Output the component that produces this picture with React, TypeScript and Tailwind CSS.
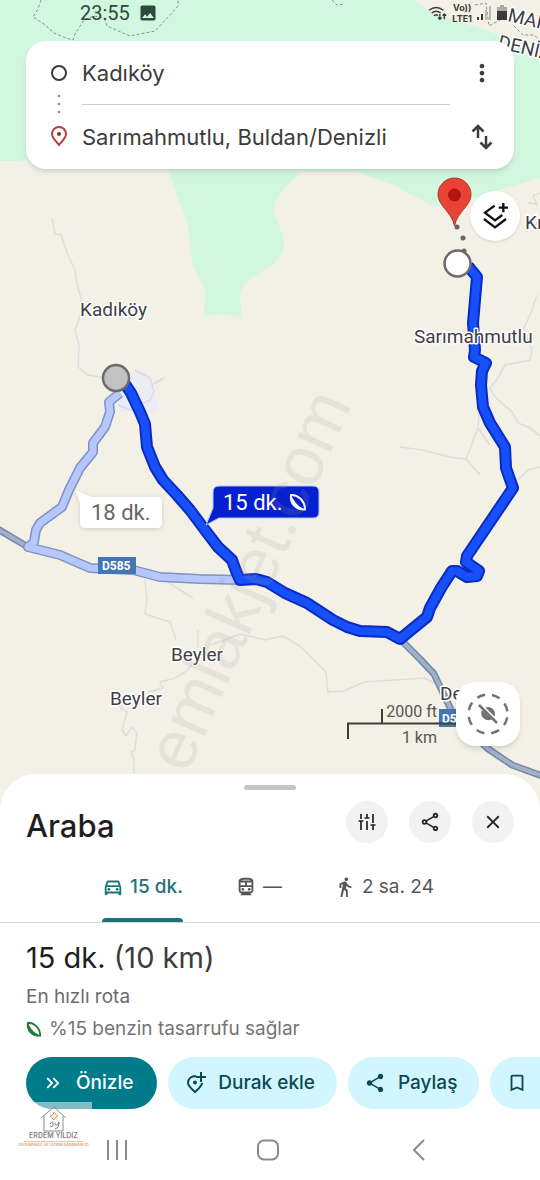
import { useState, type ReactNode } from 'react'
import {
  MdBookmarkBorder,
  MdClose,
  MdDirectionsWalk,
  MdImage,
  MdKeyboardDoubleArrowRight,
  MdMoreVert,
  MdOutlineDirectionsCar,
  MdOutlineDirectionsSubway,
  MdOutlineShare,
  MdShare,
} from 'react-icons/md'

const MAIN_ROUTE =
  'M125 384 131 393 140 412 145 424 147 447 155 467 163 480 177 495 190 510 205 530 218 547 232 560 236 571 240 580 256 579 267 582 285 593 307 603 333 620 347 627 360 631 387 632 400 639 427 617 430 608 441 588 452 571 457 571 467 577 477 576 479 571 466 562 467 556 513 488 506 468 505 447 490 423 483 407 481 385 482 371 486 363 474 357 475 350 473 323 475 300 477 277 468 266'

const ALT_ROUTE =
  'M120 393 109 402 110 412 105 427 93 443 93 452 80 468 69 490 62 507 40 523 36 530 34 542 28 547 60 555 90 568 133 570 160 577 200 579 240 580'

const TRACKS = [
  'M52 218 55 234 61 235 68 255 75 270 77 285 81 298 82 310 75 330 79 345 78 367 88 375 105 378',
  'M145 580 147 600 145 614 157 618 170 622 176 640',
  'M168 582 180 590 193 598',
  'M192 665 185 672 175 678 160 682 163 688 148 692',
  'M198 630V648M210 645 225 640 240 634 265 640 283 636 300 646 314 660 326 672 328 692 344 691 364 682 425 678 436 684',
  'M124 700 121 708 127 712 122 730 126 736 132 727 137 733 135 750 131 752 134 760 134 780',
  'M537 295 530 315 524 328 532 350 530 360 505 365 498 378 490 388 495 397 512 412 518 423 530 428 540 436',
  'M400 447 422 450 450 457 466 459 480 475M466 459 478 428 480 400M478 428 490 445',
  'M528 203 537 204 533 196 540 193M540 467 528 470 518 480',
]

function LeafIcon({ className }: { className?: string }) {
  return (
    <svg viewBox="0 0 18 18" className={className} aria-hidden="true">
      <path d="M2 2C1 10 6 17 16 16.500 10 14 5 9 2 2Z" fill="currentColor" />
      <path
        d="M2 2C8 1.500 16 7 16 16.500 6 17 1 10 2 2Z"
        fill="none"
        stroke="currentColor"
        strokeWidth="2"
        strokeLinejoin="round"
      />
    </svg>
  )
}

function MapCanvas() {
  return (
    <svg
      viewBox="0 0 540 810"
      preserveAspectRatio="xMidYMin slice"
      className="absolute inset-0 h-full w-full"
      role="img"
      aria-label="Harita"
    >
      <rect width="540" height="810" fill="#f3f0e5" />
      <path d="M0 0H415L430 12 500 35 540 60V178L495 191 450 206 435 207 395 186 355 171H302L283 190Q271 205 275 215L283 236Q287 248 276 262L250 279Q241 286 240 296L242 318Q222 312 204 316L205 290 193 265 187 222 166 165 150 161H0Z" fill="#d1f8df" />
      <g fill="none" stroke="#7f9a90" strokeWidth="1" strokeDasharray="3 2">
        <path d="M41 0 38 9 33 17 44 24 54 33 66 38 73 40 75 34 84 20 94 16 104 18 107 26 130 36 155 31 170 15 178 6V-2" />
        <path d="M332 0 337 5 345 4" />
        <path d="M475 5 486 3 489 26 500 20M514 26 523 35 534 35 540 40" />
      </g>

      <g fill="none" stroke="#dcdde0" strokeWidth="1.5">
        {TRACKS.map((d) => (
          <path key={d} d={d} />
        ))}
      </g>
      <path d="M128 372 145 371 152 388 158 402 157 412 120 412 116 400Z" fill="#ebecf4" />
      <path d="M135 370 150 378 154 392 150 400 130 410 118 405M152 385 164 378" fill="none" stroke="#d9dbe6" strokeWidth="1.500" />

      <g fill="none" strokeLinejoin="round">
        <path d="M-4 528 28 547M400 639 420 659 434 674 444 695 454 716 487 748 512 765 545 777" stroke="#7488a6" strokeWidth="7" />
        <path d="M-4 528 28 547M400 639 420 659 434 674 444 695 454 716 487 748 512 765 545 777" stroke="#a1b1c9" strokeWidth="4" />
        <path d={ALT_ROUTE} stroke="#7d92c6" strokeWidth="10" />
        <path d={ALT_ROUTE} stroke="#b6c8fb" strokeWidth="7" />
        <path d={MAIN_ROUTE} stroke="#0a2ac4" strokeWidth="12" />
        <path d={MAIN_ROUTE} stroke="#1750fb" strokeWidth="8" />
      </g>

      {/* endpoints */}
      <circle cx="116" cy="378" r="13" fill="#c2c2c2" stroke="#6b6b6b" strokeWidth="2.500" />
      <g fill="#666">
        <circle cx="457" cy="227" r="2.500" />
        <circle cx="463" cy="238" r="2.500" />
        <circle cx="464" cy="251" r="2.500" />
      </g>
      <circle cx="457.500" cy="263.500" r="13" fill="#fff" stroke="#6b6b6b" strokeWidth="2.500" />
      <path d="M454.500 226C452 212 438 206 438 194.500a16.500 16.500 0 0 1 33 0C471 206 457 212 454.500 226Z" fill="#ea4335" stroke="#a83a31" strokeWidth="1" />
      <circle cx="454.500" cy="195" r="6.500" fill="#b31412" />

      <g
        fontFamily="Roboto, sans-serif"
        fontSize="19"
        fill="#3c4046"
        stroke="#fff"
        strokeWidth="3"
        strokeLinejoin="round"
        paintOrder="stroke"
      >
        <text x="80" y="316">Kadıköy</text>
        <text x="414" y="343">Sarımahmutlu</text>
        <text x="171" y="661">Beyler</text>
        <text x="110" y="705">Beyler</text>
        <text x="525" y="229">Kı</text>
        <text x="440" y="700">De</text>
        <text transform="translate(507 21) rotate(13)">MAN</text>
        <text transform="translate(497 48) rotate(13)">DENİZ</text>
      </g>

      <g fontFamily="Roboto, sans-serif" fontSize="12" fontWeight="700" fill="#fff">
        <rect x="98" y="557" width="38" height="17" fill="#4277b3" />
        <text x="102" y="570">D585</text>
        <rect x="439" y="709" width="38" height="18" fill="#4277b3" />
        <text x="442" y="723">D585</text>
      </g>

      {/* duration callouts */}
      <g fontFamily="Roboto, sans-serif" fontSize="22">
        <path d="M75 490 92 497H157Q162 497 162 502V523Q162 528 157 528H85Q80 528 80 523V503Z" fill="#fff" className="drop-shadow-sm" />
        <text x="91" y="520" fill="#666">18 dk.</text>
        <path d="M206 525 213 508V492Q213 486 219 486H313Q319 486 319 492V512Q319 518 313 518H219Z" fill="#0720cf" stroke="#b6c8fb" strokeWidth="1" />
        <text x="223" y="510" fill="#fff">15 dk.</text>
      </g>
      <svg x="289" y="493" width="18" height="18" className="text-white">
        <LeafIcon />
      </svg>

      <path d="M348 739V723.500H456M382 723.500V709" fill="none" stroke="#3f3f3f" strokeWidth="2" />
      <g fontFamily="Roboto, sans-serif" fontSize="16" fill="#555" textAnchor="end">
        <text x="437" y="717">2000 ft</text>
        <text x="437" y="743">1 km</text>
      </g>

      <text
        transform="translate(187 775) rotate(-66)"
        fontFamily="Liberation Sans, sans-serif"
        fontSize="69"
        fill="#999"
        fillOpacity="0.16"
      >
        emlakjet.com
      </text>
    </svg>
  )
}

function StatusBar() {
  return (
    <div className="relative flex h-[26px] items-center justify-between pl-20 pr-8 text-[#2f4a3d]">
      <div className="flex items-center gap-2">
        <span className="font-[Roboto,sans-serif] text-[20px] leading-6">23:55</span>
        <MdImage className="size-5" />
      </div>
      <div className="flex items-center gap-1 text-[#3c3c3c]">
        <svg viewBox="0 0 22 18" className="h-[18px] w-5" fill="none" stroke="currentColor" strokeWidth="1.500" aria-hidden="true">
          <path d="M1 6Q9 0 17 6M4 9Q9 5 14 9M6.500 12Q9 10 11 12" />
          <path d="M13 10v6m-2-2 2 2 2-2M18 16v-6m-2 2 2-2 2 2" />
        </svg>
        <span className="flex flex-col text-center text-[9px] font-bold leading-[11px]">
          <span>Vo))</span>
          <span>LTE1</span>
        </span>
        <svg viewBox="0 0 16 16" className="size-4" aria-hidden="true">
          <path d="M1 12h2v3H1zM5 9h2v6H5z" fill="currentColor" />
          <path d="M9 5h2v10H9zM13 1h2v14h-2z" fill="#b8b8b8" />
        </svg>
        <svg viewBox="0 0 12 18" className="h-[18px] w-3" aria-hidden="true">
          <path d="M4 1h4v2h3v5H1V3h3z" fill="#aaa" />
          <path d="M1 7h10v9H1z" fill="#3a3a3a" />
        </svg>
      </div>
    </div>
  )
}

function SearchCard() {
  return (
    <div className="relative mx-[26px] mt-[15px] grid grid-cols-[56px_1fr_64px] rounded-[20px] bg-white text-[#3c3c3c] shadow-md">
      <div className="row-span-2 flex flex-col items-center justify-between py-[22px] pl-[10px]">
        <svg viewBox="0 0 20 20" className="size-5" fill="none" stroke="currentColor" strokeWidth="2" aria-hidden="true">
          <circle cx="10" cy="10" r="7" />
        </svg>
        <svg viewBox="0 0 4 20" className="h-5 w-1" fill="#8a8a8a" aria-hidden="true">
          <circle cx="2" cy="2" r="1.300" />
          <circle cx="2" cy="10" r="1.300" />
          <circle cx="2" cy="18" r="1.300" />
        </svg>
        <svg viewBox="0 0 18 22" className="h-[22px] w-[18px]" aria-hidden="true">
          <path d="M9 20C6 16 2 13 2 9a7 7 0 0 1 14 0c0 4-4 7-7 11Z" fill="none" stroke="#b3403b" strokeWidth="2" />
          <circle cx="9" cy="9" r="2" fill="#8c2f2b" />
        </svg>
      </div>
      <input
        aria-label="Başlangıç noktası"
        defaultValue="Kadıköy"
        className="h-16 w-full min-w-0 border-b border-[#cfcfcf] bg-transparent text-[22px] outline-none"
      />
      <button aria-label="Diğer seçenekler" className="flex items-center justify-center">
        <MdMoreVert className="size-7" />
      </button>
      <input
        aria-label="Varış noktası"
        defaultValue="Sarımahmutlu, Buldan/Denizli"
        className="h-16 w-full min-w-0 bg-transparent text-[22px] outline-none"
      />
      <button aria-label="Yön değiştir" className="flex items-center justify-center">
        <svg viewBox="0 0 24 28" className="h-7 w-6" fill="none" stroke="currentColor" strokeWidth="2.500" aria-hidden="true">
          <path d="M8 15V3M2.500 8.500 8 3l5.500 5.500M16 13v12M10.500 19.500 16 25l5.500-5.500" />
        </svg>
      </button>
    </div>
  )
}

function MapButtons() {
  return (
    <>
      <button
        aria-label="Katmanlar"
        className="relative mt-[22px] mr-5 flex size-[50px] items-center justify-center self-end rounded-full bg-white shadow"
      >
        <svg viewBox="0 0 78 78" className="size-[26px]" fill="none" stroke="#111" strokeWidth="7" aria-hidden="true">
          <path d="M38 8 9 29l30 23 22-16M6 48l33 25 33-25M64 0v28M50 14h28" />
        </svg>
      </button>
      <button
        aria-label="Konumuma git"
        className="relative mt-auto mr-5 mb-16 flex size-[64px] items-center justify-center self-end rounded-[20px] bg-white shadow-md"
      >
        <svg viewBox="0 0 44 44" className="size-11" fill="none" stroke="#707276" strokeWidth="2.500" aria-hidden="true">
          <circle cx="22" cy="22" r="19.500" strokeDasharray="8.300 7.015" strokeDashoffset="-3.500" />
          <path d="M16 18a7 7 0 0 0 10 9ZM19.500 15.500a7 7 0 0 1 9 9Z" fill="#707276" stroke="none" />
          <path d="M13 13 31 31" />
        </svg>
      </button>
    </>
  )
}

function RoundButton({ label, children }: { label: string; children: ReactNode }) {
  return (
    <button
      aria-label={label}
      className="flex size-[42px] items-center justify-center rounded-full bg-[#f2f2f2] text-[#222]"
    >
      {children}
    </button>
  )
}

const modes = [
  { id: 'car', label: '15 dk.', icon: MdOutlineDirectionsCar },
  { id: 'transit', label: '—', icon: MdOutlineDirectionsSubway },
  { id: 'walk', label: '2 sa. 24', icon: MdDirectionsWalk },
]

function RouteSheet() {
  const [mode, setMode] = useState('car')

  return (
    <section className="relative -mt-9 overflow-hidden rounded-t-[36px] bg-white pt-[11px]">
      <div className="mx-auto h-[5px] w-[52px] rounded-full bg-[#c4c4c4]" />

      <div className="mt-[11px] flex items-start justify-between px-[26px]">
        <h1 className="text-[31px] leading-[50px] font-medium text-[#1f1f1f]">Araba</h1>
        <div className="flex gap-[21px]">
          <RoundButton label="Seçenekler">
            <svg viewBox="0 0 20 20" className="size-5" fill="none" stroke="currentColor" strokeWidth="1.700" aria-hidden="true">
              <path d="M4 2v5M1.500 9h5M4 9v9M10 2v4M7.500 6h5M10 9v9M16 2v9M13.500 13h5M16 13v5" />
            </svg>
          </RoundButton>
          <RoundButton label="Paylaş">
            <MdOutlineShare className="size-[22px]" />
          </RoundButton>
          <RoundButton label="Kapat">
            <MdClose className="size-[22px]" />
          </RoundButton>
        </div>
      </div>

      <div role="tablist" className="mt-4 flex justify-center gap-[52px] border-b border-[#d5d5d5] pr-1">
        {modes.map(({ id, label, icon: Icon }) => (
          <button
            key={id}
            role="tab"
            aria-selected={mode === id}
            onClick={() => setMode(id)}
            className={
              mode === id
                ? 'relative flex h-[55px] items-start gap-[6px] pt-2 text-[19px] leading-6 font-medium text-[#1c7479]'
                : 'relative flex h-[55px] items-start gap-[6px] pt-2 text-[19px] leading-6 text-[#555]'
            }
          >
            <Icon className="mt-px size-[22px]" />
            {label}
            {mode === id && <span className="absolute inset-x-0 bottom-0 h-1 rounded-t bg-[#1c7479]" />}
          </button>
        ))}
      </div>

      <div className="px-[26px] pt-4">
        <h2 className="text-[29px] leading-[38px] text-[#1f1f1f]">
          15 dk. <span className="text-[#3c3c3c]">(10 km)</span>
        </h2>
        <p className="mt-1 text-[19px] leading-8 text-[#6b6b6b]">En hızlı rota</p>
        <p className="flex items-center gap-[7px] text-[19px] leading-8 text-[#757575]">
          <LeafIcon className="size-4 text-[#1e7b3c]" />
          %15 benzin tasarrufu sağlar
        </p>
      </div>

      <div className="mt-3 flex gap-[11px] overflow-hidden pl-[26px] text-[19px] font-medium whitespace-nowrap text-[#0b4a52]">
        <button className="flex h-[52px] shrink-0 items-center gap-3 rounded-full bg-[#007b8a] pr-6 pl-4 text-white">
          <MdKeyboardDoubleArrowRight className="size-[22px]" />
          Önizle
        </button>
        <button className="flex h-[52px] shrink-0 items-center gap-3 rounded-full bg-[#d2f6ff] pr-[22px] pl-[18px]">
          <svg viewBox="0 0 20 22" className="h-[22px] w-5" fill="none" stroke="currentColor" strokeWidth="2" aria-hidden="true">
            <path d="M10 4C5 4 2 7 2 11c0 3 4 6 7 9 3-3 7-6 7-9M15 0v10M10 5h10" />
            <circle cx="9" cy="10.500" r="2" fill="currentColor" stroke="none" />
          </svg>
          Durak ekle
        </button>
        <button className="flex h-[52px] shrink-0 items-center gap-3 rounded-full bg-[#d2f6ff] pr-[22px] pl-4">
          <MdShare className="size-[22px]" />
          Paylaş
        </button>
        <button aria-label="Kaydet" className="flex h-[52px] w-[130px] shrink-0 items-center rounded-full bg-[#d2f6ff] pl-4">
          <MdBookmarkBorder className="size-[22px]" />
        </button>
      </div>

      <nav className="flex h-[71px] items-center justify-around pt-[10px] pr-[45px] pl-[41px] text-[#8a8a8a]">
        <button aria-label="Son uygulamalar">
          <svg viewBox="0 0 22 22" className="size-[22px]" fill="none" stroke="currentColor" strokeWidth="2" aria-hidden="true">
            <path d="M2 1v20M11 1v20M20 1v20" />
          </svg>
        </button>
        <button aria-label="Ana ekran">
          <svg viewBox="0 0 22 22" className="size-[22px]" fill="none" stroke="currentColor" strokeWidth="2" aria-hidden="true">
            <rect x="1" y="1.500" width="20" height="19" rx="6" />
          </svg>
        </button>
        <button aria-label="Geri">
          <svg viewBox="0 0 22 22" className="size-[22px]" fill="none" stroke="currentColor" strokeWidth="2" aria-hidden="true">
            <path d="M16 1 6 11l10 10" />
          </svg>
        </button>
      </nav>

      <AgencyMark />
    </section>
  )
}

// agency stamp laid over the lower left corner
function AgencyMark() {
  return (
    <div className="pointer-events-none absolute bottom-8 left-[17px] w-[75px]">
      <div className="ml-[9px] h-2 bg-white/50" />
      <svg viewBox="0 0 75 38" className="block w-full overflow-visible" fill="none" aria-hidden="true">
        <path d="M24 8 37 -3 49 8M27 6V21H46V6" stroke="#8a8a8a" strokeWidth="1" />
        <path d="M37 2 39 5 41 6 38 8 37 10 35 8 33 6 36 5Z" stroke="#e8986b" />
        <path d="M33 14q3-4 3 0t-3 2M38 13q0 4 3 1l1-2q0 6-4 7" stroke="#777" />
        <text x="36.500" y="28" textAnchor="middle" fontFamily="Inter, sans-serif" fontSize="7" fontWeight="600" fill="#858585">
          ERDEM YILDIZ
        </text>
        <path d="M7 31.500H66" stroke="#e0a988" strokeWidth="0.700" />
        <text x="36.500" y="36" textAnchor="middle" fontFamily="Inter, sans-serif" fontSize="3.400" fontWeight="600" fill="#e8986b">
          GAYRİMENKUL VE YATIRIM DANIŞMANLIĞI
        </text>
      </svg>
    </div>
  )
}

export default function App() {
  return (
    <main className="flex min-h-screen flex-col overflow-hidden bg-white font-['Inter',sans-serif]">
      <div className="relative flex min-h-[640px] flex-1 flex-col overflow-hidden">
        <MapCanvas />
        <StatusBar />
        <SearchCard />
        <MapButtons />
      </div>
      <RouteSheet />
    </main>
  )
}
